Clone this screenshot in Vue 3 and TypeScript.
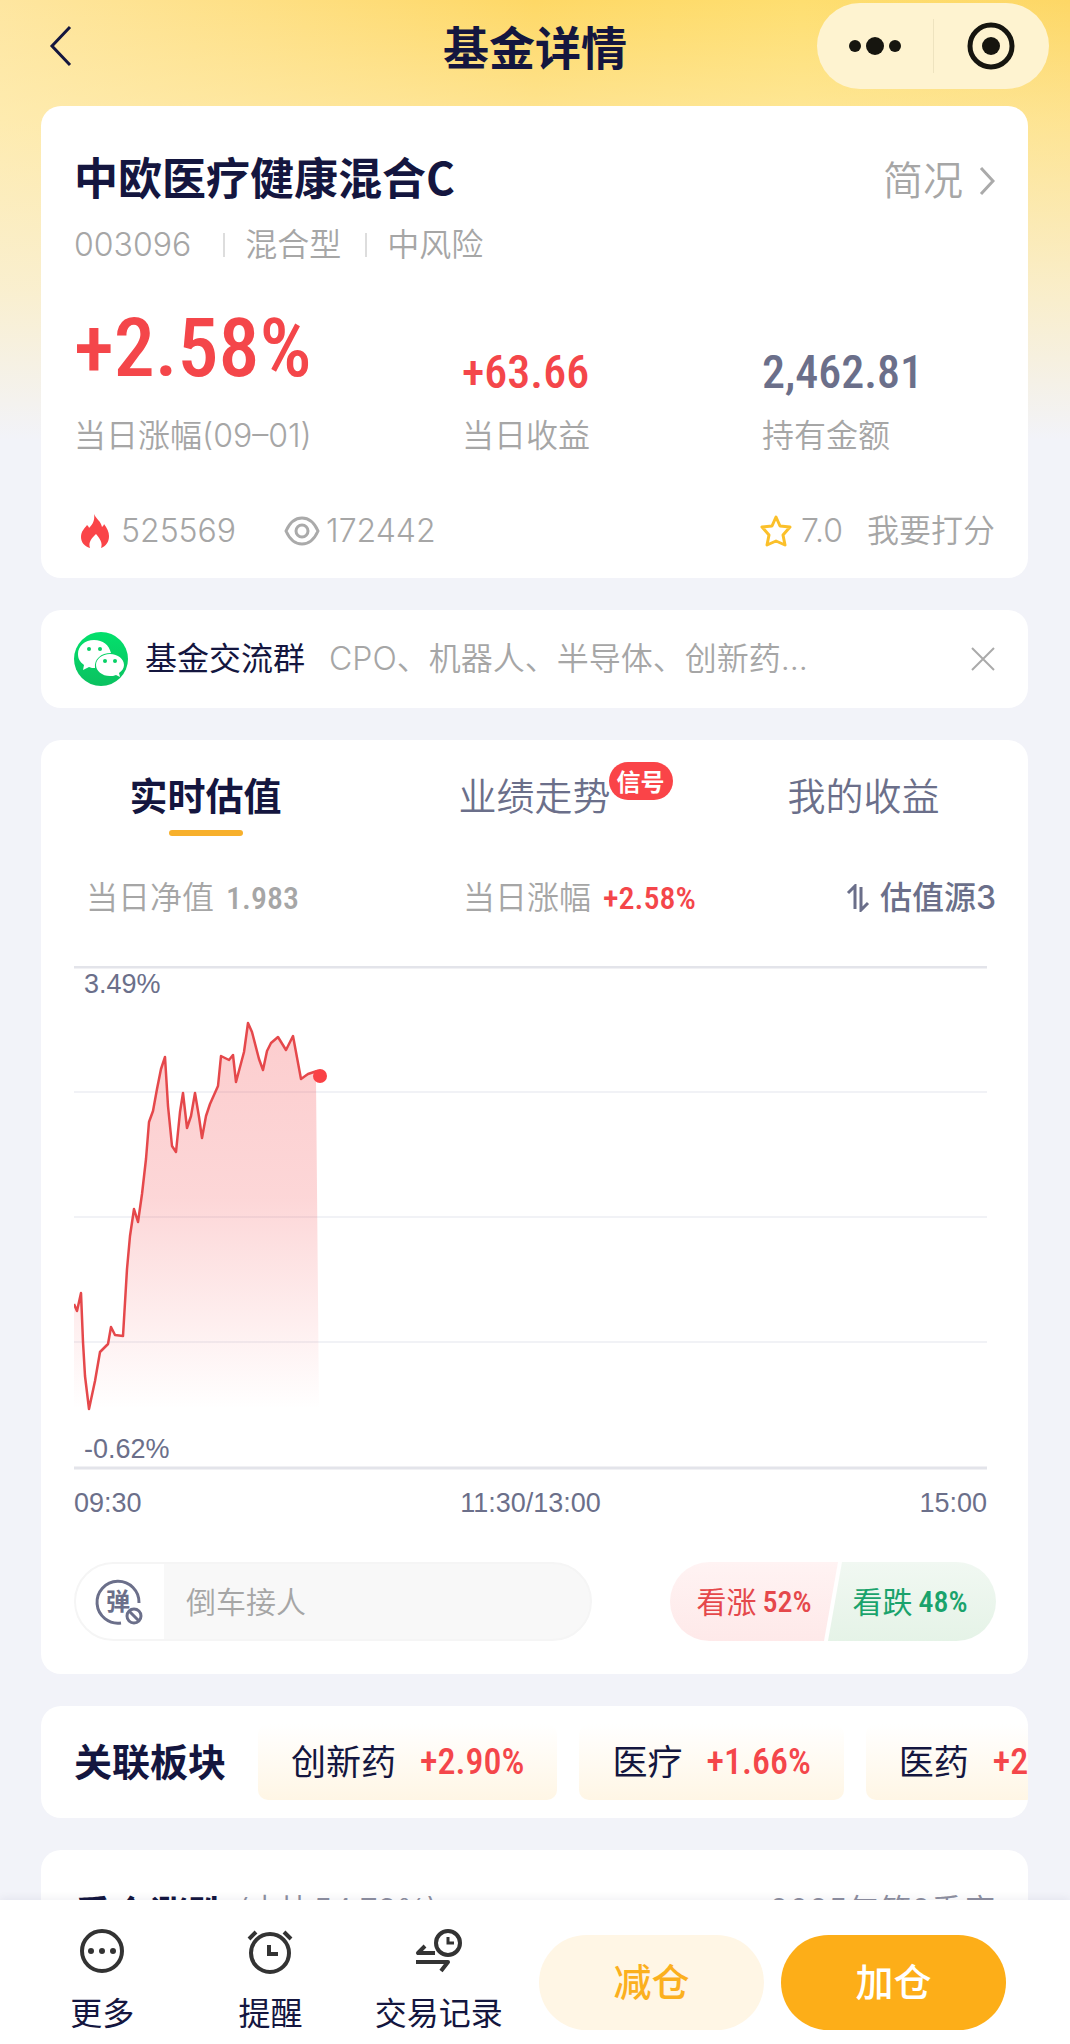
<script setup lang="ts">
interface Tab { label: string; badge?: string }
interface Sector { name: string; change: string }

const tabs: Tab[] = [{ label: '实时估值' }, { label: '业绩走势', badge: '信号' }, { label: '我的收益' }]
const sectors: Sector[] = [
  { name: '创新药', change: '+2.90%' },
  { name: '医疗', change: '+1.66%' },
  { name: '医药', change: '+2.04%' },
]
const gridLines: number[] = [126, 251, 376]
const points: [number, number][] = [
  [0, 338], [3, 345], [7, 327], [9, 376], [11, 410], [15, 443], [21, 415], [26, 386], [34, 378], [37, 361],
  [41, 369], [49, 370], [53, 303], [56, 270], [60, 243], [64, 256], [68, 228], [72, 193], [75, 156], [79, 145],
  [83, 123], [87, 103], [91, 91], [94, 140], [98, 180], [102, 186], [106, 146], [109, 127], [113, 162], [117, 150],
  [121, 127], [125, 151], [128, 172], [132, 150], [136, 138], [144, 120], [147, 90], [155, 94], [159, 89], [162, 116],
  [170, 86], [174, 57], [178, 66], [185, 93], [189, 104], [193, 85], [197, 77], [204, 71], [212, 84], [219, 70],
  [227, 113], [234, 108], [243, 105],
]
const line: string = points.map((p) => p.join(',')).join(' ')
const area: string = `0,443 ${line} 242,113 245,443`
</script>

<template>
  <div class="page">
    <header class="top">
      <button class="back" aria-label="返回">
        <svg width="26" height="42" viewBox="0 0 26 42"><path d="M22 2 4 21 22 40" fill="none" stroke="#14163f" stroke-width="3" /></svg>
      </button>
      <h1>基金详情</h1>
      <div class="capsule">
        <button aria-label="菜单">
          <svg width="52" height="20" viewBox="0 0 52 20" fill="#16150f"><circle cx="6" cy="10" r="6" /><circle cx="26" cy="10" r="9" /><circle cx="46" cy="10" r="6" /></svg>
        </button>
        <i></i>
        <button aria-label="关闭">
          <svg width="48" height="48" viewBox="0 0 48 48"><circle cx="24" cy="24" r="21" fill="none" stroke="#16150f" stroke-width="5" /><circle cx="24" cy="24" r="9" fill="#16150f" /></svg>
        </button>
      </div>
    </header>

    <main>
      <section class="card fund">
        <div class="name-row">
          <h2>中欧医疗健康混合C</h2>
          <a href="#profile">简况
            <svg width="16" height="30" viewBox="0 0 16 30"><path d="M2 2 14 15 2 28" fill="none" stroke="#aaa" stroke-width="3" /></svg>
          </a>
        </div>
        <div class="tags"><span>003096</span><span>混合型</span><span>中风险</span></div>
        <dl class="stats">
          <div><dt>当日涨幅(09–01)</dt><dd class="num big up">+2.58%</dd></div>
          <div><dt>当日收益</dt><dd class="num up">+63.66</dd></div>
          <div><dt>持有金额</dt><dd class="num">2,462.81</dd></div>
        </dl>
        <div class="meta">
          <span class="fire">
            <svg width="28" height="34" viewBox="0 0 28 34"><path d="M13 0c2 5 7 7 8 13 1-1 2-2 2-3 3 4 5 8 5 12 0 6-3 10-8 12 2-5-1-9-5-14-4 4-8 8-6 14-6-2-9-6-9-11 0-6 4-9 6-12 1 1 2 2 2 3 4-4 6-8 5-14z" fill="#fa4448" /></svg>
            525569
          </span>
          <span class="eye">
            <svg width="36" height="30" viewBox="0 0 36 30" fill="none" stroke="#aaa" stroke-width="3"><path d="M2 15C6 6 12 2 18 2s12 4 16 13c-4 9-10 13-16 13S6 24 2 15z" /><circle cx="18" cy="15" r="6" /></svg>
            172442
          </span>
          <a href="#score">
            <svg width="34" height="34" viewBox="0 0 34 34"><path d="m17 3 4 9 10 1-7 8 2 10-9-4-9 4 2-10-7-8 10-1z" fill="none" stroke="#fbc02a" stroke-width="3" stroke-linejoin="round" /></svg>
            <span>7.0</span><span class="rate">我要打分</span>
          </a>
        </div>
      </section>

      <section class="card group">
        <svg width="54" height="54" viewBox="0 0 54 54">
          <defs><linearGradient id="wx" x2="0" y2="1"><stop stop-color="#03e06c" /><stop offset="1" stop-color="#0bc160" /></linearGradient></defs>
          <circle cx="27" cy="27" r="27" fill="url(#wx)" />
          <path d="M20 8C11 8 4 14 4 22c0 5 2 8 6 11l-1 5 6-3c2 1 4 1 6 1-1-9 6-15 16-15C35 13 29 8 20 8z" fill="#fff" />
          <path d="M36 22c-8 0-14 5-14 11s6 11 14 11c2 0 4 0 6-1l4 2-1-4c3-2 5-5 5-8 0-6-6-11-14-11z" fill="#fff" />
          <g fill="#07d066"><circle cx="15" cy="17" r="2" /><circle cx="26" cy="17" r="2" /><circle cx="31" cy="29" r="2" /><circle cx="41" cy="29" r="2" /></g>
        </svg>
        <strong>基金交流群</strong>
        <p>CPO、机器人、半导体、创新药...</p>
        <button aria-label="关闭提示"><svg width="24" height="24" viewBox="0 0 24 24"><path d="M1 1 23 23M23 1 1 23" stroke="#aaa" stroke-width="2" /></svg></button>
      </section>

      <section class="card estimate">
        <nav class="tabs">
          <button v-for="(tab, i) in tabs" :key="tab.label" :class="{ active: i === 0 }">
            <span>{{ tab.label }}<em v-if="tab.badge">{{ tab.badge }}</em></span>
          </button>
        </nav>
        <div class="quote">
          <span>当日净值 <b class="num">1.983</b></span>
          <span>当日涨幅 <b class="num up">+2.58%</b></span>
          <button>
            <svg width="24" height="28" viewBox="0 0 24 28" fill="none" stroke="#6b6f8a" stroke-width="3"><path d="M2 9 9 2V25M15 3V26L22 19" /></svg>
            估值源3
          </button>
        </div>
        <div class="chart">
          <svg viewBox="0 0 913 504">
            <defs><linearGradient id="fade" gradientUnits="userSpaceOnUse" x1="0" y1="57" x2="0" y2="443"><stop stop-color="#f4464a" stop-opacity=".27" /><stop offset=".45" stop-color="#f4464a" stop-opacity=".22" /><stop offset="1" stop-color="#f4464a" stop-opacity="0" /></linearGradient></defs>
            <path v-for="y in gridLines" :key="y" :d="`M0 ${y}H913`" stroke="#f1f2f6" stroke-width="2" />
            <path d="M0 1H913M0 502H913" stroke="#e3e4ea" stroke-width="3" />
            <polygon :points="area" fill="url(#fade)" />
            <polyline :points="line" fill="none" stroke="#e5484b" stroke-width="2.5" stroke-linejoin="round" />
            <circle cx="246" cy="110" r="7" fill="#fa4145" />
          </svg>
          <span class="high">3.49%</span>
          <span class="low">-0.62%</span>
        </div>
        <div class="times"><span>09:30</span><span>11:30/13:00</span><span>15:00</span></div>
        <div class="vote">
          <div class="danmu">
            <button aria-label="弹幕开关">
              <svg width="52" height="48" viewBox="0 0 52 48" fill="none" stroke="#6b6f8a" stroke-width="3">
                <path d="M27 45A21 21 0 1 1 45 25" />
                <circle cx="40" cy="38" r="7" /><path d="m35 33 10 10" />
                <text x="24" y="32" text-anchor="middle" font-size="24" font-weight="700" fill="#6b6f8a" stroke="none">弹</text>
              </svg>
            </button>
            <input type="text" aria-label="弹幕" placeholder="倒车接人" />
          </div>
          <div class="sides">
            <button class="rise">看涨 <b class="num">52%</b></button>
            <button class="fall">看跌 <b class="num">48%</b></button>
          </div>
        </div>
      </section>

      <section class="card sectors">
        <h3>关联板块</h3>
        <a v-for="s in sectors" :key="s.name" href="#sector">{{ s.name }}<b class="num up">{{ s.change }}</b></a>
      </section>

      <section class="card holdings">
        <h3>重仓涨跌</h3><span>(占比54.73%)</span><span class="season">2025年第2季度</span>
      </section>
    </main>

    <footer class="bar">
      <button class="tool">
        <svg width="48" height="46" viewBox="0 0 48 46"><circle cx="24" cy="23" r="20" fill="none" stroke="#333" stroke-width="4" /><g fill="#333"><circle cx="13" cy="23" r="3" /><circle cx="24" cy="23" r="3" /><circle cx="35" cy="23" r="3" /></g></svg>
        更多
      </button>
      <button class="tool">
        <svg width="48" height="46" viewBox="0 0 48 46" fill="none" stroke="#333" stroke-width="4"><circle cx="24" cy="25" r="19" /><path d="M23 17v9h9M3 11 10 4M38 4l7 7" /></svg>
        提醒
      </button>
      <button class="tool">
        <svg width="48" height="46" viewBox="0 0 48 46" fill="none" stroke="#333" stroke-width="4"><circle cx="33" cy="15" r="12" /><path d="M33 9v6h6" stroke-width="3" /><path d="M10 18 3 25H20M1 34H33L26 43" stroke-linejoin="round" /></svg>
        交易记录
      </button>
      <button class="act sell">减仓</button>
      <button class="act buy">加仓</button>
    </footer>
  </div>
</template>

<style>
body { margin: 0; background: #f2f3f9; }
</style>

<style scoped>
.page {
  height: 100vh;
  overflow: hidden;
  display: flex;
  flex-direction: column;
  font-family: Inter, "Noto Sans CJK SC", sans-serif;
  font-size: 32px;
  font-weight: 350;
  line-height: 40px;
  color: #a6a6a6;
  background:
    linear-gradient(to bottom, rgba(254, 243, 205, 0) 0, rgba(254, 240, 190, 0.5) 120px, rgba(249, 240, 212, 0.9) 290px, #f2f3f9 440px),
    linear-gradient(to right, #fee6a0 0, #fed866 50%, #fede70 75%, #fdd766 100%);
}
h1, h2, h3 { margin: 0; font-weight: 700; color: #14163f; }
p, dl, dd { margin: 0; }
button { border: 0; padding: 0; background: none; font: inherit; color: inherit; }
a { color: inherit; text-decoration: none; }
svg { display: block; flex: none; }
.num { font-family: "Roboto Condensed", "Liberation Sans Narrow", Roboto, sans-serif; font-weight: 500; }
.up { color: #f4464a; }

.top { display: grid; grid-template-columns: 1fr auto 1fr; align-items: center; height: 92px; margin-bottom: 14px; flex: none; }
.back { justify-self: start; padding-left: 48px; }
h1 { font-size: 46px; line-height: 56px; padding-top: 4px; }
.capsule { justify-self: end; margin-right: 21px; width: 232px; height: 86px; border-radius: 43px; background: #fef3d0; display: flex; align-items: center; }
.capsule button { flex: 1; display: flex; justify-content: center; }
.capsule i { width: 1px; height: 54px; background: #eee3bf; }

main { flex: 1; min-height: 0; overflow: hidden; padding: 0 42px 0 41px; display: flex; flex-direction: column; gap: 32px; }
.card { flex: none; background: #fff; border-radius: 20px; padding: 0 33px; box-sizing: border-box; }

.fund { padding: 42px 33px 27px; }
.name-row { display: flex; justify-content: space-between; align-items: center; height: 56px; }
h2 { font-family: "Noto Sans CJK SC", sans-serif; font-size: 44px; }
.name-row a { display: flex; align-items: center; gap: 16px; padding-top: 10px; font-size: 40px; }
.tags { display: flex; margin-top: 21px; }
.tags span + span { position: relative; margin-left: 24px; padding-left: 22px; }
.tags span + span::before { content: ""; position: absolute; left: 0; top: 8px; width: 2px; height: 24px; background: #ddd; }
.tags span:nth-child(2) { margin-left: 32px; }
.stats { display: grid; grid-template-columns: 388px 300px 1fr; align-items: end; margin-top: 37px; }
.stats div { display: flex; flex-direction: column-reverse; }
dd { font-size: 46px; line-height: 56px; margin-bottom: 16px; color: #6b6f8a; }
dd.up { color: #f4464a; }
dd.big { font-size: 82px; line-height: 92px; margin-bottom: 22px; }
.meta { display: flex; align-items: center; height: 40px; margin-top: 55px; }
.meta > * { display: flex; align-items: center; }
.fire { gap: 12px; padding-left: 7px; }
.eye { gap: 6px; margin-left: 48px; }
.meta a { gap: 8px; margin-left: auto; }
.rate { margin-left: 16px; }

.group { display: flex; align-items: center; height: 98px; }
.group strong { margin-left: 17px; font-weight: 400; color: #14163f; }
.group p { flex: 1; margin-left: 24px; }

.estimate { padding: 16px 32px 33px 33px; }
.tabs { display: grid; grid-template-columns: repeat(3, 1fr); margin: 0 -32px 0 -33px; font-size: 38px; color: #6b6f8a; }
.tabs button { height: 80px; display: flex; justify-content: center; align-items: center; position: relative; }
.tabs span { position: relative; }
.tabs .active { color: #14163f; font-weight: 700; }
.tabs .active::after { content: ""; position: absolute; bottom: 0; width: 74px; height: 6px; border-radius: 3px; background: #f7b02c; }
.tabs em { position: absolute; left: 100%; top: -14px; margin-left: -2px; white-space: nowrap; font: 700 24px/38px "Noto Sans CJK SC", sans-serif; color: #fff; background: #fa4448; border-radius: 19px; padding: 0 8px; }
.quote { display: grid; grid-template-columns: 377px 1fr auto; margin: 42px 0 48px 12px; }
.quote .num { margin-left: 3px; }
.quote button { display: flex; align-items: center; gap: 10px; font-weight: 500; color: #6b6f8a; }
.chart { position: relative; margin-right: 9px; }
.chart svg { width: 100%; }
.chart span { position: absolute; left: 10px; }
.chart span, .times { font-family: "Liberation Sans", sans-serif; font-size: 27px; font-weight: 400; line-height: 32px; color: #6b6f8a; }
.high { top: 2px; }
.low { bottom: 5px; }
.times { display: flex; justify-content: space-between; margin: 17px 9px 43px 0; }
.vote { display: flex; justify-content: space-between; height: 79px; font-size: 30px; }
.danmu { width: 518px; box-sizing: border-box; display: flex; border: 2px solid #f5f5f5; border-radius: 40px; background: #f8f8f8; overflow: hidden; }
.danmu button { width: 88px; background: #fff; display: flex; align-items: center; justify-content: center; }
.danmu input { flex: 1; min-width: 0; border: 0; padding: 0 22px; background: none; font: inherit; outline: 0; }
.danmu input::placeholder { color: #a6a6a6; opacity: 1; }
.sides { display: flex; width: 326px; font-weight: 400; }
.sides button { display: flex; align-items: center; justify-content: center; gap: 6px; }
.sides .rise { width: 168px; border-radius: 40px 0 0 40px; color: #e5484b; background: linear-gradient(#fff3f3, #fee9e9); clip-path: polygon(0 0, 100% 0, 154px 100%, 0 100%); }
.sides .fall { width: 172px; margin-left: -14px; border-radius: 0 40px 40px 0; color: #1aa36c; background: linear-gradient(#f1f8f2, #e5f3e7); clip-path: polygon(18px 0, 100% 0, 100% 100%, 4px 100%); }

.sectors { display: flex; align-items: center; height: 112px; padding-right: 0; gap: 22px; overflow: hidden; white-space: nowrap; }
h3 { font-size: 38px; }
.sectors h3 { margin-right: 10px; flex: none; }
.sectors a { flex: none; display: flex; align-items: center; gap: 24px; height: 76px; padding: 0 33px; border-radius: 10px; background: linear-gradient(#fff, #fff6e5); font-size: 35px; font-weight: 400; color: #14163f; }
.sectors .num { font-size: 36px; }
.holdings { display: flex; align-items: center; height: 128px; }
.holdings span { margin-left: 12px; padding-bottom: 6px; color: #8e90a0; }
.holdings .season { margin-left: auto; }

.bar { position: relative; flex: none; box-sizing: border-box; height: 144px; padding: 0 64px 0 18px; background: #fff; box-shadow: 0 -2px 8px rgba(20, 22, 63, 0.06); display: flex; align-items: center; }
.tool { flex: 1; display: flex; flex-direction: column; align-items: center; gap: 20px; padding-top: 18px; font-weight: 400; color: #14163f; }
.act { width: 225px; height: 95px; margin-top: 20px; border-radius: 48px; font-size: 38px; font-weight: 500; }
.sell { background: #fff6e5; color: #fbb01e; margin-left: 16px; }
.buy { background: #fdae18; color: #fff; margin-left: 17px; }
</style>
